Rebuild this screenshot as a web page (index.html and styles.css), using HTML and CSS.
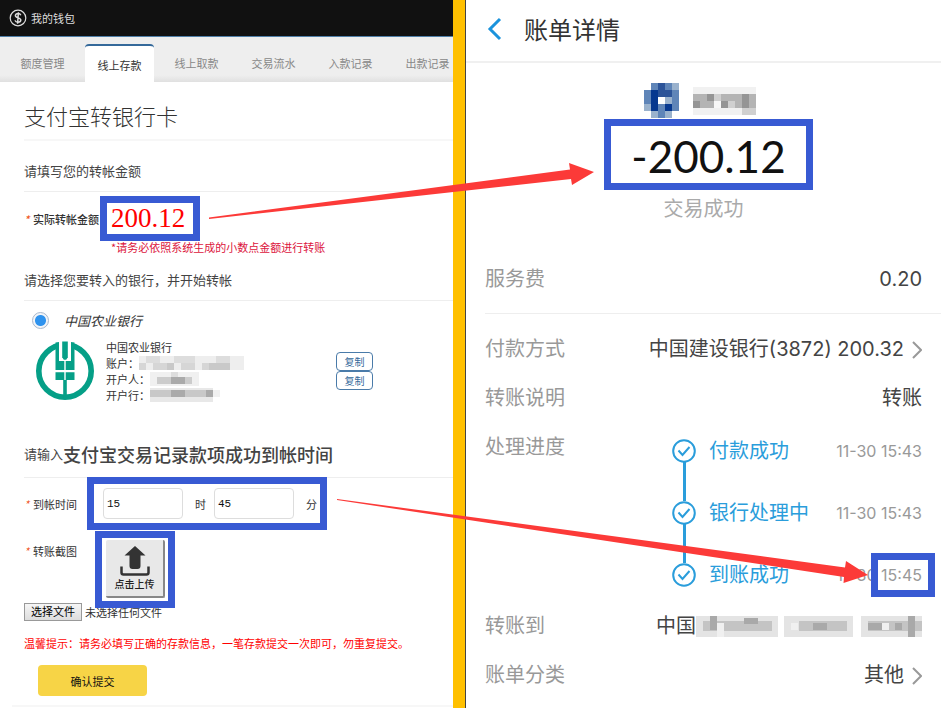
FILE: index.html
```html
<!DOCTYPE html>
<html lang="zh-CN">
<head>
    <meta charset="UTF-8">
    <meta name="viewport" content="width=device-width, initial-scale=1.0">
    <title>我的钱包</title>
    <link rel="stylesheet" href="styles.css">
</head>
<body>
    <div class="page">
        <div class="wallet">
            <header class="topbar">
                <svg class="coin" viewBox="0 0 18 18" width="18" height="18" fill="none" stroke="#ddd">
                    <circle cx="9" cy="9" r="7.8" stroke-width="1.2"/>
                    <path d="M11.8 6.2C11.3 5 10.2 4.6 9 4.6c-1.600 0-2.600.8-2.600 2 0 3 5.400 1.500 5.400 4.500 0 1.400-1.200 2.200-2.800 2.200-1.500 0-2.600-.6-3-1.900M9.400 3.200 8.600 14.800" stroke-width="1.500"/>
                </svg>
                <span>我的钱包</span>
            </header>
            <nav class="tabs">
                <a href="#">额度管理</a>
                <a href="#" class="active">线上存款</a>
                <a href="#">线上取款</a>
                <a href="#">交易流水</a>
                <a href="#">入款记录</a>
                <a href="#">出款记录</a>
            </nav>

            <form class="deposit">
                <h1>支付宝转银行卡</h1>

                <h2>请填写您的转帐金额</h2>
                <div class="field amount-field">
                    <span class="field-name strong"><i>*</i>实际转帐金额</span>
                    <strong class="amount mark">200.12</strong>
                </div>
                <p class="note">*请务必依照系统生成的小数点金额进行转账</p>

                <h2 class="bank-title">请选择您要转入的银行，并开始转帐</h2>
                <div class="bank-choice">
                    <input type="radio" id="abc" name="bank" checked>
                    <label for="abc">中国农业银行</label>
                </div>
                <div class="bank">
                    <svg class="bank-logo" viewBox="0 0 60 60" width="60" height="60">
                        <circle cx="30" cy="30" r="26.200" fill="none" stroke="#059f87" stroke-width="5.600"/>
                        <path d="M21 0h18v20H21z" fill="#fff"/>
                        <g fill="#059f87">
                            <path d="M20.500 1.600 24 1v19h5.300v9H20.500zM39.500 1.600 36 1v19h-5.300v9h8.800z"/>
                            <path d="M27.200.6h5.600v15.600l-1.600 2.600h-2.400l-1.600-2.600z"/>
                            <path d="M20.500 31.300h8.800V39h-8.800zM30.700 31.300h8.800V39h-8.800z"/>
                            <path d="M28.200 39h3.600v19h-3.600z"/>
                        </g>
                    </svg>
                    <div class="bank-info">
                        <div>中国农业银行</div>
                        <div>账户：
                            <svg class="pixels" viewBox="0 0 105 14" width="105" height="14">
                                <path d="M0 0h105v14H0z" fill="#eee"/>
                                <path d="M7 0h14v7H7zM35 0h21v7H35zM77 0h14v7H77z" fill="#ddd"/>
                                <path d="M0 7h7v7H0zM14 7h14v7H14zM42 7h14v7H42zM63 7h7v7h-7z" fill="#d6d6d6"/>
                                <path d="M28 7h7v7h-7zM70 7h21v7H70z" fill="#c9c9c9"/>
                            </svg>
                        </div>
                        <div>开户人：
                            <svg class="pixels" viewBox="0 0 49 14" width="49" height="14">
                                <path d="M0 0h49v14H0z" fill="#f0f0f0"/>
                                <path d="M7 5h35v7H7z" fill="#ccc"/>
                                <path d="M21 5h14v7H21z" fill="#aaa"/>
                                <path d="M21 0h7v5h-7z" fill="#ddd"/>
                            </svg>
                        </div>
                        <div>开户行：
                            <svg class="pixels" viewBox="0 0 70 14" width="70" height="14">
                                <path d="M0 0h63v14H0z" fill="#e8e8e8"/>
                                <path d="M0 2h63v7H0z" fill="#c8c8c8"/>
                                <path d="M21 2h14v7H21zM56 2h7v7h-7z" fill="#aaa"/>
                                <path d="M63 2h7v7h-7z" fill="#f0f0f0"/>
                            </svg>
                        </div>
                    </div>
                    <div class="copy">
                        <button type="button">复制</button>
                        <button type="button">复制</button>
                    </div>
                </div>

                <h2 class="time-title">请输入<b>支付宝交易记录款项成功到帐时间</b></h2>
                <div class="field time-field">
                    <span class="field-name"><i>*</i>到帐时间</span>
                    <div class="time mark">
                        <input type="text" id="hour" value="15">
                        <label for="hour">时</label>
                        <input type="text" id="minute" value="45">
                        <label for="minute">分</label>
                    </div>
                </div>
                <div class="field upload-field">
                    <span class="field-name"><i>*</i>转账截图</span>
                    <div class="upload mark">
                        <button type="button">
                            <svg viewBox="0 0 34 32" width="34" height="32">
                                <path d="M17 1 27.500 10.500h-5V21q0 3-3 3h-5q-3 0-3-3V10.500h-5z" fill="#333"/>
                                <path d="M3.500 21.500v6q0 2 2 2h23q2 0 2-2v-6" fill="none" stroke="#333" stroke-width="2.500"/>
                            </svg>
                            <span>点击上传</span>
                        </button>
                    </div>
                </div>
                <label class="file">
                    <input type="file">
                    <span class="file-button">选择文件</span>
                    <span>未选择任何文件</span>
                </label>
                <p class="warning">温馨提示：请务必填写正确的存款信息，一笔存款提交一次即可，勿重复提交。</p>
                <button type="submit" class="submit">确认提交</button>
            </form>
        </div>

        <div class="divider"></div>

        <div class="bill">
            <header class="bill-head">
                <a href="#" aria-label="返回">
                    <svg viewBox="0 0 16 24" width="16" height="24" fill="none" stroke="#1b93dc" stroke-width="3">
                        <path d="M14 2 4 12l10 10"/>
                    </svg>
                </a>
                <h1>账单详情</h1>
            </header>

            <section class="summary">
                <div class="payee">
                    <svg viewBox="0 0 35 35" width="35" height="35" shape-rendering="crispEdges">
                        <path d="M7 0h21v35H7zM0 7h35v21H0z" fill="#5f85b8"/>
                        <path d="M7 7h7v7H7zM7 14h7v14H7zM21 21h7v7h-7z" fill="#06388f"/>
                        <path d="M14 0h7v7h-7zM14 7h7v7h-7zM21 7h7v7h-7z" fill="#2c5499"/>
                        <path d="M0 21h7v7H0zM7 28h7v7H7zM28 0h7v7h-7zM21 14h7v7h-7zM21 28h7v7h-7z" fill="#9ab2cd"/>
                        <path d="M14 14h7v7h-7z" fill="#fff"/>
                    </svg>
                    <svg viewBox="0 0 70 28" width="70" height="28" shape-rendering="crispEdges">
                        <path d="M0 0h63v28H0z" fill="#f1f1f1"/>
                        <path d="M0 7h63v14H0z" fill="#b4b4b4"/>
                        <path d="M14 7h7v7h-7zM0 14h7v7H0zM28 14h7v7h-7zM49 7h7v14h-7z" fill="#959595"/>
                        <path d="M21 7h7v7h-7zM35 14h7v7h-7zM49 21h14v7H49z" fill="#d0d0d0"/>
                        <path d="M21 14h7v7h-7z" fill="#f8f8f8"/>
                    </svg>
                </div>
                <div class="total mark">-200.12</div>
                <p class="status">交易成功</p>
            </section>

            <dl class="rows fee">
                <div class="row"><dt>服务费</dt><dd>0.20</dd></div>
            </dl>
            <dl class="rows">
                <div class="row">
                    <dt>付款方式</dt>
                    <dd>中国建设银行(3872) 200.32
                        <svg class="more" viewBox="0 0 10 18" width="10" height="18"><path d="M1 1l8 8-8 8"/></svg>
                    </dd>
                </div>
                <div class="row"><dt>转账说明</dt><dd>转账</dd></div>
                <div class="row progress">
                    <dt>处理进度</dt>
                    <dd>
                        <ol class="steps">
                            <li>
                                <svg viewBox="0 0 24 24" width="24" height="24"><circle cx="12" cy="12" r="10.800"/><path d="M6.500 11.500l4 4.500 7-8"/></svg>
                                <span>付款成功</span><time>11-30 15:43</time>
                            </li>
                            <li>
                                <svg viewBox="0 0 24 24" width="24" height="24"><circle cx="12" cy="12" r="10.800"/><path d="M6.500 11.500l4 4.500 7-8"/></svg>
                                <span>银行处理中</span><time>11-30 15:43</time>
                            </li>
                            <li>
                                <svg viewBox="0 0 24 24" width="24" height="24"><circle cx="12" cy="12" r="10.800"/><path d="M6.500 11.500l4 4.500 7-8"/></svg>
                                <span>到账成功</span><time>11-30 <b>15:45</b></time>
                            </li>
                        </ol>
                    </dd>
                </div>
                <div class="row">
                    <dt>转账到</dt>
                    <dd>中国
                        <svg class="payee-name" viewBox="0 0 230 21" width="230" height="21" shape-rendering="crispEdges">
                            <path d="M0 0h83v21H0zM90 0h70v21H90zM168 0h62v21h-62z" fill="#e4e4e4"/>
                            <path d="M7 5h70v10H7zM105 5h49v10h-49zM175 5h55v10h-55z" fill="#c4c4c4"/>
                            <path d="M14 0h7v14h-7zM49 2h14v6H49zM119 7h14v7h-14zM175 7h14v7h-14zM203 7h7v7h-7zM216 0h7v21h-7z" fill="#a9a9a9"/>
                            <path d="M21 7h7v14h-7zM97 7h7v7h-7zM189 7h7v7h-7z" fill="#f0f0f0"/>
                        </svg>
                    </dd>
                </div>
                <div class="row">
                    <dt>账单分类</dt>
                    <dd>其他
                        <svg class="more" viewBox="0 0 10 18" width="10" height="18"><path d="M1 1l8 8-8 8"/></svg>
                    </dd>
                </div>
            </dl>
        </div>

        <!-- arrows from the form values to the bill values -->
        <svg class="arrows" viewBox="0 0 941 708" preserveAspectRatio="none" fill="#fc3a38">
            <path d="M209 217.500 570 169.500 569 163 594 172 572 185 571 179 209 219z"/>
            <path d="M337 499 845 567.500 846 561 868 575 843.500 583 844 577 337 500z"/>
        </svg>
    </div>
</body>
</html>
```
FILE: styles.css
```css
* {
    box-sizing: border-box;
}

body {
    margin: 0;
    background: #fff;
    color: #333;
    font-family: "Noto Sans CJK SC", sans-serif;
    font-size: 11px;
}

h1, h2, p, dl, dd, ol {
    margin: 0;
    padding: 0;
}

button, input {
    font-family: inherit;
    font-size: 11px;
}

.page {
    position: relative;
    display: grid;
    grid-template-columns: 453fr 12px 476fr;
    min-height: 100vh;
}

.divider {
    background: #ffc000;
}

.mark {
    border: 7px solid #385ad3;
    background: #fff;
}

.arrows {
    position: absolute;
    top: 0;
    left: 0;
    width: 100%;
    height: 100%;
    pointer-events: none;
}

/* wallet */
.wallet {
    min-width: 0;
    overflow: hidden;
}

.topbar {
    display: flex;
    align-items: center;
    gap: 4px;
    height: 37px;
    padding-left: 9px;
    background: #111;
    border-bottom: 1px solid #4f7fa8;
    color: #ddd;
}

.tabs {
    display: flex;
    align-items: flex-end;
    gap: 8px;
    height: 45px;
    padding-left: 8px;
    overflow: hidden;
    background: linear-gradient(#eee 85%, #e0e0e0);
}

.tabs a {
    flex: 0 0 69px;
    height: 38px;
    line-height: 38px;
    text-align: center;
    color: #888;
    text-decoration: none;
}

.tabs .active {
    background: #fff;
    border-top: 2px solid #34699a;
    border-radius: 4px 4px 0 0;
    color: #333;
}

.deposit {
    padding-left: 24px;
}

.deposit h1 {
    padding: 17px 0 8px;
    border-bottom: 2px solid #f7f7f7;
    font-size: 22px;
    font-weight: 300;
    line-height: 32px;
}

.deposit h2 {
    padding: 20px 0 10px;
    border-bottom: 1px solid #eee;
    color: #444;
    font-size: 13px;
    font-weight: 400;
    line-height: 20px;
}

.deposit .bank-title {
    padding-top: 17px;
}

.deposit .time-title {
    display: flex;
    align-items: center;
    padding: 39px 0 11px;
    line-height: 24px;
}

.time-title b {
    font-size: 18px;
    font-weight: 500;
}

.field {
    display: flex;
    align-items: center;
}

.field-name {
    flex: none;
    line-height: 20px;
}

.field-name.strong {
    font-weight: 500;
}

.field-name i {
    display: inline-block;
    width: 9px;
    color: #f0592b;
}

.amount-field {
    margin-top: 4px;
}

.amount {
    margin-left: 1px;
    padding: 0 8px 0 4px;
    color: #f00;
    font-family: "Liberation Serif", serif;
    font-size: 27px;
    font-weight: 400;
    line-height: 31px;
}

.note {
    padding-left: 87px;
    color: #dc143c;
    line-height: 12px;
}

.bank-choice {
    display: flex;
    align-items: center;
    gap: 15px;
    height: 20px;
    margin: 9px 0;
    padding-left: 8px;
    font-size: 13px;
    font-style: italic;
}

.bank-choice input {
    appearance: none;
    width: 17px;
    height: 17px;
    margin: 0;
    border: 1px solid #a9b8cc;
    border-radius: 50%;
    background: radial-gradient(circle, #2f93ee 5px, #f2f5f9 6px);
}

.bank {
    display: flex;
    align-items: center;
    padding-left: 11px;
}

.bank-info {
    flex: none;
    width: 230px;
    margin-left: 11px;
    line-height: 16px;
}

.bank-info div {
    display: flex;
    height: 16px;
}

.pixels {
    margin-top: 1px;
}

.copy {
    display: flex;
    flex-direction: column;
}

.copy button {
    width: 37px;
    height: 19px;
    padding: 0;
    border: 1px solid #4a7ba9;
    border-radius: 4px;
    background: #fff;
    color: #34699a;
    font-size: 10px;
    line-height: 16px;
}

.time-field {
    margin-top: -1px;
}

.time {
    display: flex;
    align-items: center;
    height: 53px;
    margin-left: 10px;
    padding: 0 3px 0 9px;
}

.time input {
    width: 80px;
    height: 31px;
    padding: 0 3px;
    border: 1px solid #ddd;
    border-radius: 4px;
    color: #111;
    font-family: "Liberation Mono", monospace;
}

.time label {
    margin: 0 8px 0 12px;
}

.time label:last-child {
    margin-right: 0;
}

.upload-field {
    align-items: flex-start;
    margin-top: 1px;
}

.upload-field .field-name {
    padding-top: 10px;
}

.upload {
    position: relative;
    z-index: 1;
    height: 77px;
    margin: 0 0 -5px 18px;
    padding: 2px 3px 3px 4px;
}

.upload button {
    display: flex;
    flex-direction: column;
    align-items: center;
    width: 59px;
    height: 58px;
    padding: 5px 0 0;
    border: 0;
    border-right: 2px solid #888;
    border-bottom: 2px solid #888;
    border-radius: 2px;
    background: #e8e8e8;
    color: #222;
    font-size: 10px;
    font-weight: 500;
    line-height: 14px;
}

.file {
    display: flex;
    align-items: center;
    gap: 3px;
    height: 17px;
}

.file input {
    position: absolute;
    width: 1px;
    height: 1px;
    opacity: 0;
}

.file-button {
    width: 58px;
    height: 18px;
    border: 1px solid #999;
    background: linear-gradient(#f6f6f6, #ddd);
    color: #000;
    line-height: 15px;
    text-align: center;
}

.warning {
    margin: 15px 0 14px;
    color: #f00;
    line-height: 16px;
}

.submit {
    display: block;
    width: 109px;
    height: 31px;
    margin-left: 14px;
    border: 0;
    border-radius: 4px;
    background: #f7d446;
    color: #111;
}

.deposit::after {
    content: "";
    display: block;
    height: 2px;
    margin: 9px 0 0 -12px;
    background: #f7f7f7;
}

/* bill */
.bill {
    border-left: 1px solid #444;
    font-family: Inter, "Noto Sans CJK SC", sans-serif;
    font-size: 20px;
}

.bill-head {
    display: flex;
    align-items: center;
    gap: 22px;
    height: 63px;
    padding: 0 20px 4px;
    border-bottom: 2px solid #f0f0f0;
}

.bill-head a {
    display: flex;
}

.bill-head h1 {
    font-size: 24px;
    font-weight: 400;
}

.summary {
    display: flex;
    flex-direction: column;
    align-items: center;
    padding-top: 19px;
}

.payee {
    display: flex;
    align-items: center;
    gap: 14px;
    height: 37px;
}

.total {
    width: 209px;
    margin-left: 10px;
    padding-top: 4px;
    color: #111;
    font-family: Lato, sans-serif;
    font-size: 44px;
    font-weight: 400;
    line-height: 53px;
    text-align: center;
}

.status {
    margin-top: 4px;
    color: #aaa;
    line-height: 30px;
}

.rows {
    margin-left: 19px;
    padding-right: 19px;
}

.rows.fee {
    margin-bottom: 11px;
    padding-top: 31px;
    padding-bottom: 9px;
    border-bottom: 1px solid #eee;
}

.row {
    display: flex;
    justify-content: space-between;
    line-height: 49px;
}

.row dt {
    color: #999;
}

.row dd {
    display: flex;
    align-items: center;
    color: #444;
}

.more {
    margin-left: 8px;
    fill: none;
    stroke: #999;
    stroke-width: 2;
}

.payee-name {
    width: 226px;
}

.steps {
    width: 250px;
    padding: 16px 0 15px;
    list-style: none;
    line-height: 24px;
}

.steps li {
    display: flex;
    height: 62px;
    background: linear-gradient(#2a9ddb, #2a9ddb) 11px 23px / 3px 40px no-repeat;
}

.steps li:last-child {
    height: 24px;
    background: none;
}

.steps svg {
    flex: none;
    margin-right: 13px;
    fill: none;
    stroke: #2a9ddb;
    stroke-width: 2;
}

.steps span {
    color: #2a9ddb;
}

.steps time {
    margin-left: auto;
    color: #999;
    font-size: 16px;
}

.steps b {
    position: relative;
    font-weight: 400;
}

/* frame drawn over the arrival time */
.steps b::after {
    content: "";
    position: absolute;
    inset: -12px -13px -12px -10px;
    border: 7px solid #385ad3;
}
```
